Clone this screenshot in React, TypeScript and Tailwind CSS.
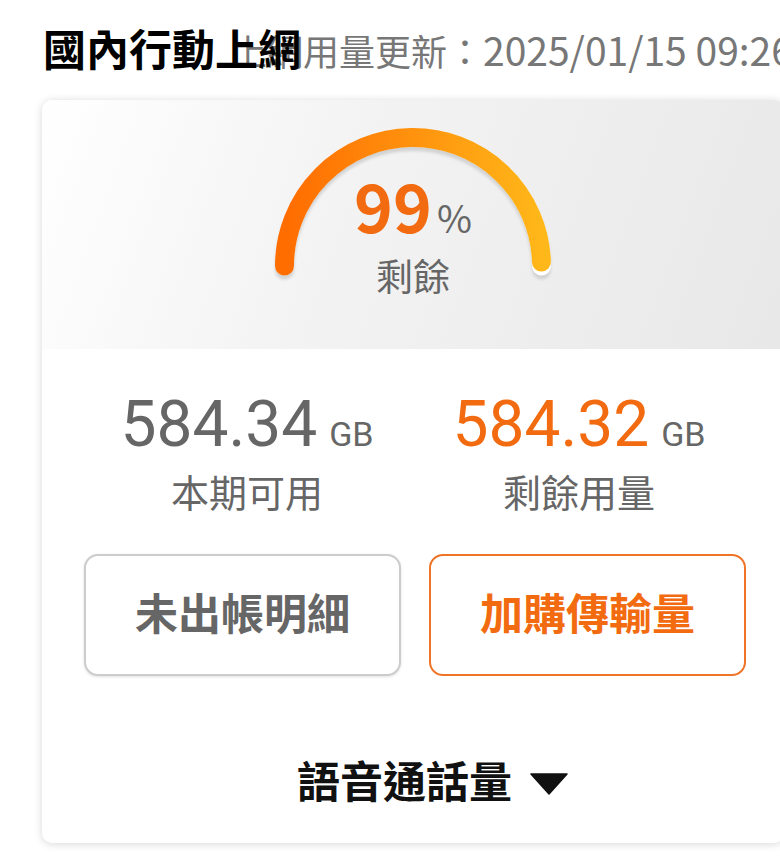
import React from "react";

const cjk = { fontFamily: "'Noto Sans CJK TC', sans-serif" };

function Gauge({ percent }: { percent: number }) {
    const cx = 145;
    const cy = 140;
    const r = 128.5;
    // semicircle from the left end (180deg) over the top to the right end (0deg)
    const a = Math.PI * (1 - percent / 100);
    const ex = cx + r * Math.cos(a);
    const ey = cy - r * Math.sin(a);
    const track = `M ${cx - r} ${cy} A ${r} ${r} 0 0 1 ${cx + r} ${cy}`;
    const fill = `M ${cx - r} ${cy} A ${r} ${r} 0 0 1 ${ex} ${ey}`;
    return (
        <svg className="absolute inset-0" width="290" height="170" viewBox="0 0 290 170">
            <defs>
                <linearGradient id="g" x1="0" y1="0" x2="1" y2="0">
                    <stop offset="0%" stopColor="#ff6c00" />
                    <stop offset="55%" stopColor="#ff960f" />
                    <stop offset="100%" stopColor="#ffb719" />
                </linearGradient>
                <filter id="blur" x="-10%" y="-10%" width="120%" height="130%">
                    <feGaussianBlur stdDeviation="1.5" />
                </filter>
            </defs>
            <path d={track} transform="translate(0 4)" fill="none" stroke="#d2d2d2" strokeWidth="19" strokeLinecap="round" filter="url(#blur)" />
            <path d={track} fill="none" stroke="#ffffff" strokeWidth="19" strokeLinecap="round" />
            <path d={fill} fill="none" stroke="url(#g)" strokeWidth="19" strokeLinecap="round" />
        </svg>
    );
}

export default function App() {
    return <div className="w-[780px] h-[868px] overflow-hidden bg-white" style={{ fontFamily: "Roboto, 'Noto Sans CJK TC', sans-serif" }}>
        <div className="flex items-baseline pt-[30px] pl-[43px] whitespace-nowrap">
            <h1 className="relative z-10 text-[43px] leading-none font-bold text-black">國內行動上網</h1>
            <span className="ml-[-70px] leading-none text-[#777777]" style={cjk}>
                <span className="text-[36px]">上網用量更新：</span>
                <span className="text-[39px]">2025/01/15 09:26</span>
            </span>
        </div>

        <div className="ml-[42px] mt-[27px] w-[742px] rounded-[10px] bg-white shadow-[0_1px_8px_rgba(0,0,0,0.16)] overflow-hidden">
            <section className="h-[249px] flex justify-center pt-[26px] bg-[linear-gradient(110deg,#ffffff_0%,#f3f3f3_40%,#e8e8e8_100%)]">
                <div className="relative w-[290px] h-[170px]">
                    <Gauge percent={99} />
                    <div className="relative flex flex-col items-center pt-[45px]">
                        <div className="flex items-baseline" style={cjk}>
                            <span className="text-[66px] leading-none font-bold text-[#f26b10]">99</span>
                            <span className="ml-[5px] text-[38px] leading-none text-[#666666]">%</span>
                        </div>
                        <div className="mt-[23px] text-[37px] leading-none text-[#666666]">剩餘</div>
                    </div>
                </div>
            </section>

            <section className="grid grid-cols-2 gap-[22px] px-[50px] pt-[44px]">
                <div className="flex flex-col items-center">
                    <div className="flex items-baseline">
                        <span className="text-[64px] leading-none text-[#666666]">584.34</span>
                        <span className="ml-[12px] text-[34px] leading-none text-[#666666]">GB</span>
                    </div>
                    <div className="mt-[18px] text-[38px] leading-none text-[#666666]">本期可用</div>
                </div>
                <div className="flex flex-col items-center">
                    <div className="flex items-baseline">
                        <span className="text-[64px] leading-none text-[#f26b10]">584.32</span>
                        <span className="ml-[12px] text-[34px] leading-none text-[#666666]">GB</span>
                    </div>
                    <div className="mt-[18px] text-[38px] leading-none text-[#666666]">剩餘用量</div>
                </div>
            </section>

            <section className="grid grid-cols-2 gap-[28px] pl-[42px] pr-[38px] mt-[41px]">
                <button className="h-[122px] rounded-[14px] border-2 border-[#cccccc] bg-white shadow-[0_1px_3px_rgba(0,0,0,0.12)] text-[43px] font-bold text-[#666666]">未出帳明細</button>
                <button className="h-[122px] rounded-[14px] border-2 border-[#ef7427] bg-white text-[43px] font-bold text-[#f26b10]">加購傳輸量</button>
            </section>

            <div className="flex items-center justify-center pl-[39px] pt-[86px] pb-[38px]">
                <span className="text-[43px] leading-none font-bold text-[#111111]">語音通話量</span>
                <svg className="ml-[18px]" width="38" height="22" viewBox="0 0 38 22">
                    <polygon points="1,1 37,1 19,21" fill="#111111" stroke="#111111" strokeWidth="1.5" strokeLinejoin="round" />
                </svg>
            </div>
        </div>
    </div>
}
